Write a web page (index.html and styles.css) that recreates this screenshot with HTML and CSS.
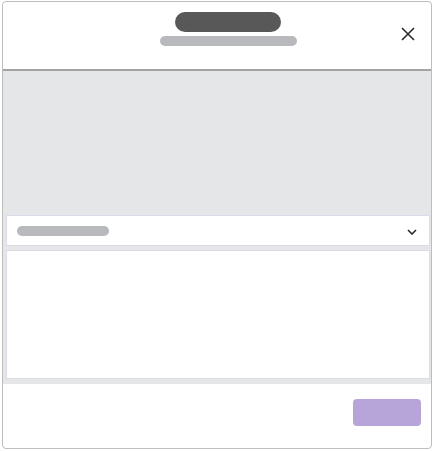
FILE: index.html
```html
<!DOCTYPE html>
<html>
<head>
<meta charset="utf-8">
<link rel="stylesheet" href="styles.css">
</head>
<body>
<div class="dialog">
  <div class="header">
    <div class="titles">
      <div class="title-pill"></div>
      <div class="sub-pill"></div>
    </div>
    <button class="close" aria-label="Close">
      <svg width="14" height="14" viewBox="0 0 14 14"><path d="M1 1 L13 13 M13 1 L1 13" stroke="#2b2b2b" stroke-width="1.6" fill="none"/></svg>
    </button>
  </div>
  <div class="content">
    <div class="select">
      <div class="ph-pill"></div>
      <svg class="chev" width="10" height="6" viewBox="0 0 10 6"><path d="M1 1 L5 5 L9 1" stroke="#2b2b2b" stroke-width="1.6" fill="none"/></svg>
    </div>
    <div class="textbox"></div>
  </div>
  <div class="footer">
    <div class="btn"></div>
  </div>
</div>
</body>
</html>
```

FILE: styles.css
```css
html, body { margin: 0; padding: 0; background: #fff; }
body { font-family: "Liberation Sans", Arial, sans-serif; }
.dialog {
  margin: 1px 2px;
  width: 430px;
  height: 448px;
  box-sizing: border-box;
  border: 1px solid #bdbdbd;
  border-radius: 4px;
  display: flex;
  flex-direction: column;
  overflow: hidden;
}
.header {
  height: 67px;
  flex: none;
  position: relative;
  display: flex;
  justify-content: center;
  border-bottom: 2px solid #a3a3a3;
}
.titles {
  display: flex;
  flex-direction: column;
  align-items: center;
  padding-top: 10px;
  gap: 4px;
  margin-left: 22px;
}
.title-pill { width: 106px; height: 20px; border-radius: 10px; background: #585858; }
.sub-pill { width: 137px; height: 10px; border-radius: 5px; background: #b8b9bc; }
.close {
  position: absolute;
  right: 16px;
  top: 25px;
  border: 0;
  background: none;
  padding: 0;
  width: 14px;
  height: 14px;
  display: block;
}
.close svg { display: block; }
.content {
  flex: none;
  height: 313px;
  box-sizing: border-box;
  background: #e5e6e8;
  padding: 144px 1px 0 3px;
  display: flex;
  flex-direction: column;
  gap: 4px;
}
.select {
  height: 31px;
  box-sizing: border-box;
  background: #fff;
  border: 1px solid #dcd9ea;
  display: flex;
  align-items: center;
  justify-content: space-between;
  padding: 0 12px 0 10px;
}
.ph-pill { width: 92px; height: 10px; border-radius: 5px; background: #b8b9bc; }
.chev { display: block; margin-top: 2px; }
.textbox {
  height: 129px;
  box-sizing: border-box;
  background: #fff;
  border: 1px solid #dcd9ea;
}
.footer {
  flex: 1;
  display: flex;
  justify-content: flex-end;
  align-items: flex-start;
  padding: 15px 10px 0 0;
}
.btn { width: 68px; height: 27px; border-radius: 4px; background: #b7a4d9; }
```
